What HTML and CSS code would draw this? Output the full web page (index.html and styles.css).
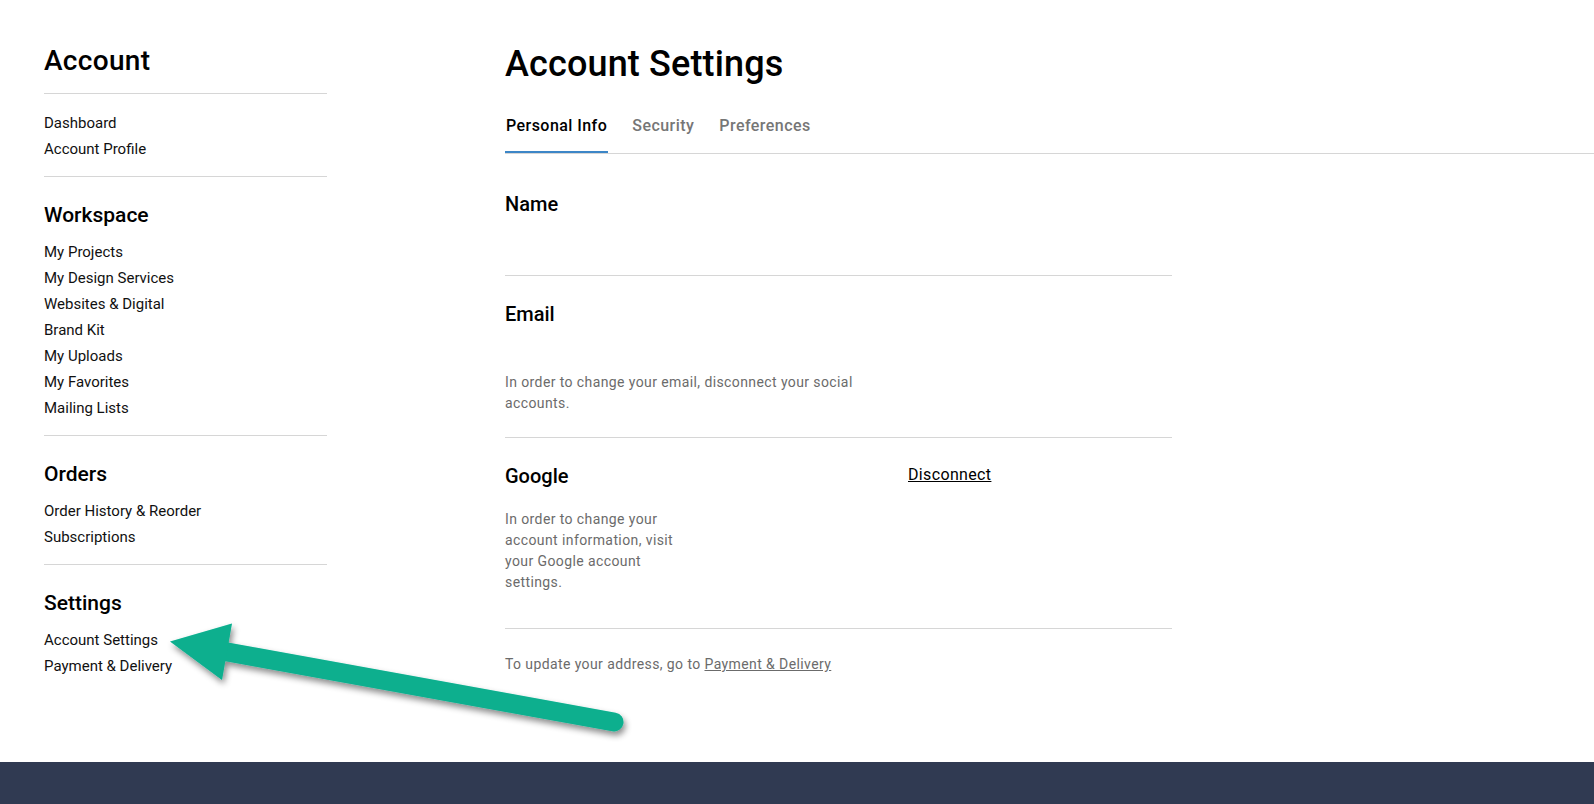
FILE: index.html
```html
<!DOCTYPE html>
<html lang="en">
<head>
<meta charset="utf-8">
<title>Account Settings</title>
<link rel="stylesheet" href="styles.css">
</head>
<body>
<div class="page">
  <div class="layout">
    <aside class="sidebar">
      <h2 class="sidebar-title">Account</h2>
      <nav class="nav-group nav-group--first">
        <a class="nav-link" href="#">Dashboard</a>
        <a class="nav-link" href="#">Account Profile</a>
      </nav>
      <nav class="nav-group">
        <h3 class="nav-heading">Workspace</h3>
        <a class="nav-link" href="#">My Projects</a>
        <a class="nav-link" href="#">My Design Services</a>
        <a class="nav-link" href="#">Websites &amp; Digital</a>
        <a class="nav-link" href="#">Brand Kit</a>
        <a class="nav-link" href="#">My Uploads</a>
        <a class="nav-link" href="#">My Favorites</a>
        <a class="nav-link" href="#">Mailing Lists</a>
      </nav>
      <nav class="nav-group">
        <h3 class="nav-heading">Orders</h3>
        <a class="nav-link" href="#">Order History &amp; Reorder</a>
        <a class="nav-link" href="#">Subscriptions</a>
      </nav>
      <nav class="nav-group nav-group--last">
        <h3 class="nav-heading">Settings</h3>
        <a class="nav-link" href="#">Account Settings</a>
        <a class="nav-link" href="#">Payment &amp; Delivery</a>
      </nav>
    </aside>

    <main class="content">
      <h1 class="page-title">Account Settings</h1>
      <div class="tabs">
        <a class="tab tab--active" href="#">Personal Info</a>
        <a class="tab" href="#">Security</a>
        <a class="tab" href="#">Preferences</a>
      </div>

      <section class="field">
        <h3 class="field-label">Name</h3>
        <div class="field-value"></div>
      </section>

      <section class="field">
        <h3 class="field-label">Email</h3>
        <div class="field-value"></div>
        <p class="field-note field-note--email">In order to change your email, disconnect your social accounts.</p>
      </section>

      <section class="field field--social">
        <div class="social-info">
          <h3 class="field-label">Google</h3>
          <p class="field-note field-note--social">In order to change your account information, visit your Google account settings.</p>
        </div>
        <a class="social-action" href="#">Disconnect</a>
      </section>

      <p class="address-note">To update your address, go to <a class="address-link" href="#">Payment &amp; Delivery</a></p>
    </main>
  </div>

  <footer class="site-footer"></footer>

  <svg class="callout" width="700" height="760" viewBox="0 0 700 760" aria-hidden="true">
    <defs>
      <filter id="callout-shadow" x="-20%" y="-40%" width="140%" height="180%">
        <feDropShadow dx="2" dy="4" stdDeviation="3" flood-color="#000" flood-opacity="0.45"/>
      </filter>
    </defs>
    <g filter="url(#callout-shadow)" fill="#08af8e" stroke="#08af8e">
      <line x1="614" y1="722" x2="222" y2="651" stroke-width="19" stroke-linecap="round"/>
      <polygon points="170,641.5 232,623.5 222,680" stroke="none"/>
    </g>
  </svg>
</div>
</body>
</html>
```

FILE: styles.css
```css
* {
  box-sizing: border-box;
}

html, body {
  margin: 0;
  padding: 0;
  background: #fff;
}

body {
  font-family: Roboto, "Liberation Sans", Arial, sans-serif;
  color: #000;
  overflow: hidden;
}

.page {
  position: relative;
}

.layout {
  display: flex;
  min-height: 762px;
  padding: 43px 0 0 44px;
}

/* ---------- sidebar ---------- */

.sidebar {
  width: 283px;
  flex: none;
  display: flex;
  flex-direction: column;
}

.sidebar-title {
  margin: 1px 0 0;
  font-size: 28px;
  line-height: 34px;
  font-weight: 500;
  letter-spacing: 0.3px;
  padding-bottom: 15px;
  border-bottom: 1px solid #d6d6d6;
}

.nav-group {
  display: flex;
  flex-direction: column;
  padding: 25px 0 14px;
  border-bottom: 1px solid #d6d6d6;
}

.nav-group--first {
  padding-top: 16px;
}

.nav-group--last {
  border-bottom: none;
}

.nav-heading {
  margin: 0 0 11px;
  font-size: 21px;
  line-height: 26px;
  font-weight: 500;
}

.nav-link {
  font-size: 15px;
  line-height: 26px;
  color: #111;
  text-decoration: none;
}

/* ---------- main ---------- */

.content {
  flex: 1;
  margin-left: 178px;
}

.page-title {
  margin: -1px 0 0;
  font-size: 36px;
  line-height: 44px;
  font-weight: 500;
  letter-spacing: 0.15px;
}

.tabs {
  display: flex;
  gap: 23px;
  margin-top: 30px;
  border-bottom: 1px solid #d6d6d6;
}

.tab {
  font-size: 16px;
  line-height: 20px;
  font-weight: 500;
  letter-spacing: 0.45px;
  color: #767676;
  text-decoration: none;
  padding: 0 1px 15px;
  border-bottom: 2px solid transparent;
}

.tab--active {
  color: #000;
  border-bottom-color: #3c86c7;
}

.field {
  width: 667px;
  padding: 26px 0 23px;
  border-bottom: 1px solid #d6d6d6;
}

.field:first-of-type {
  margin-top: 12px;
}

.field-label {
  margin: 0;
  font-size: 20px;
  line-height: 24px;
  font-weight: 500;
}

.field-value {
  min-height: 36px;
}

.field-note {
  margin: 10px 0 0;
  font-size: 14px;
  line-height: 21px;
  letter-spacing: 0.4px;
  color: #6b6b6b;
}

.field-note--email {
  max-width: 360px;
}

.field--social {
  display: grid;
  grid-template-columns: 403px 1fr;
  padding-bottom: 35px;
}

.field-note--social {
  max-width: 182px;
  margin-top: 21px;
}

.social-action {
  font-size: 16px;
  line-height: 20px;
  letter-spacing: 0.35px;
  color: #000;
  text-decoration: underline;
  justify-self: start;
  margin-top: 1px;
}

.address-note {
  margin: 25px 0 0;
  font-size: 14px;
  line-height: 21px;
  letter-spacing: 0.4px;
  color: #6b6b6b;
}

.address-link {
  color: #6b6b6b;
  text-decoration: underline;
}

/* ---------- footer ---------- */

.site-footer {
  height: 120px;
  background: #303a52;
}

/* ---------- callout arrow ---------- */

.callout {
  position: absolute;
  left: 0;
  top: 0;
  pointer-events: none;
}
```
